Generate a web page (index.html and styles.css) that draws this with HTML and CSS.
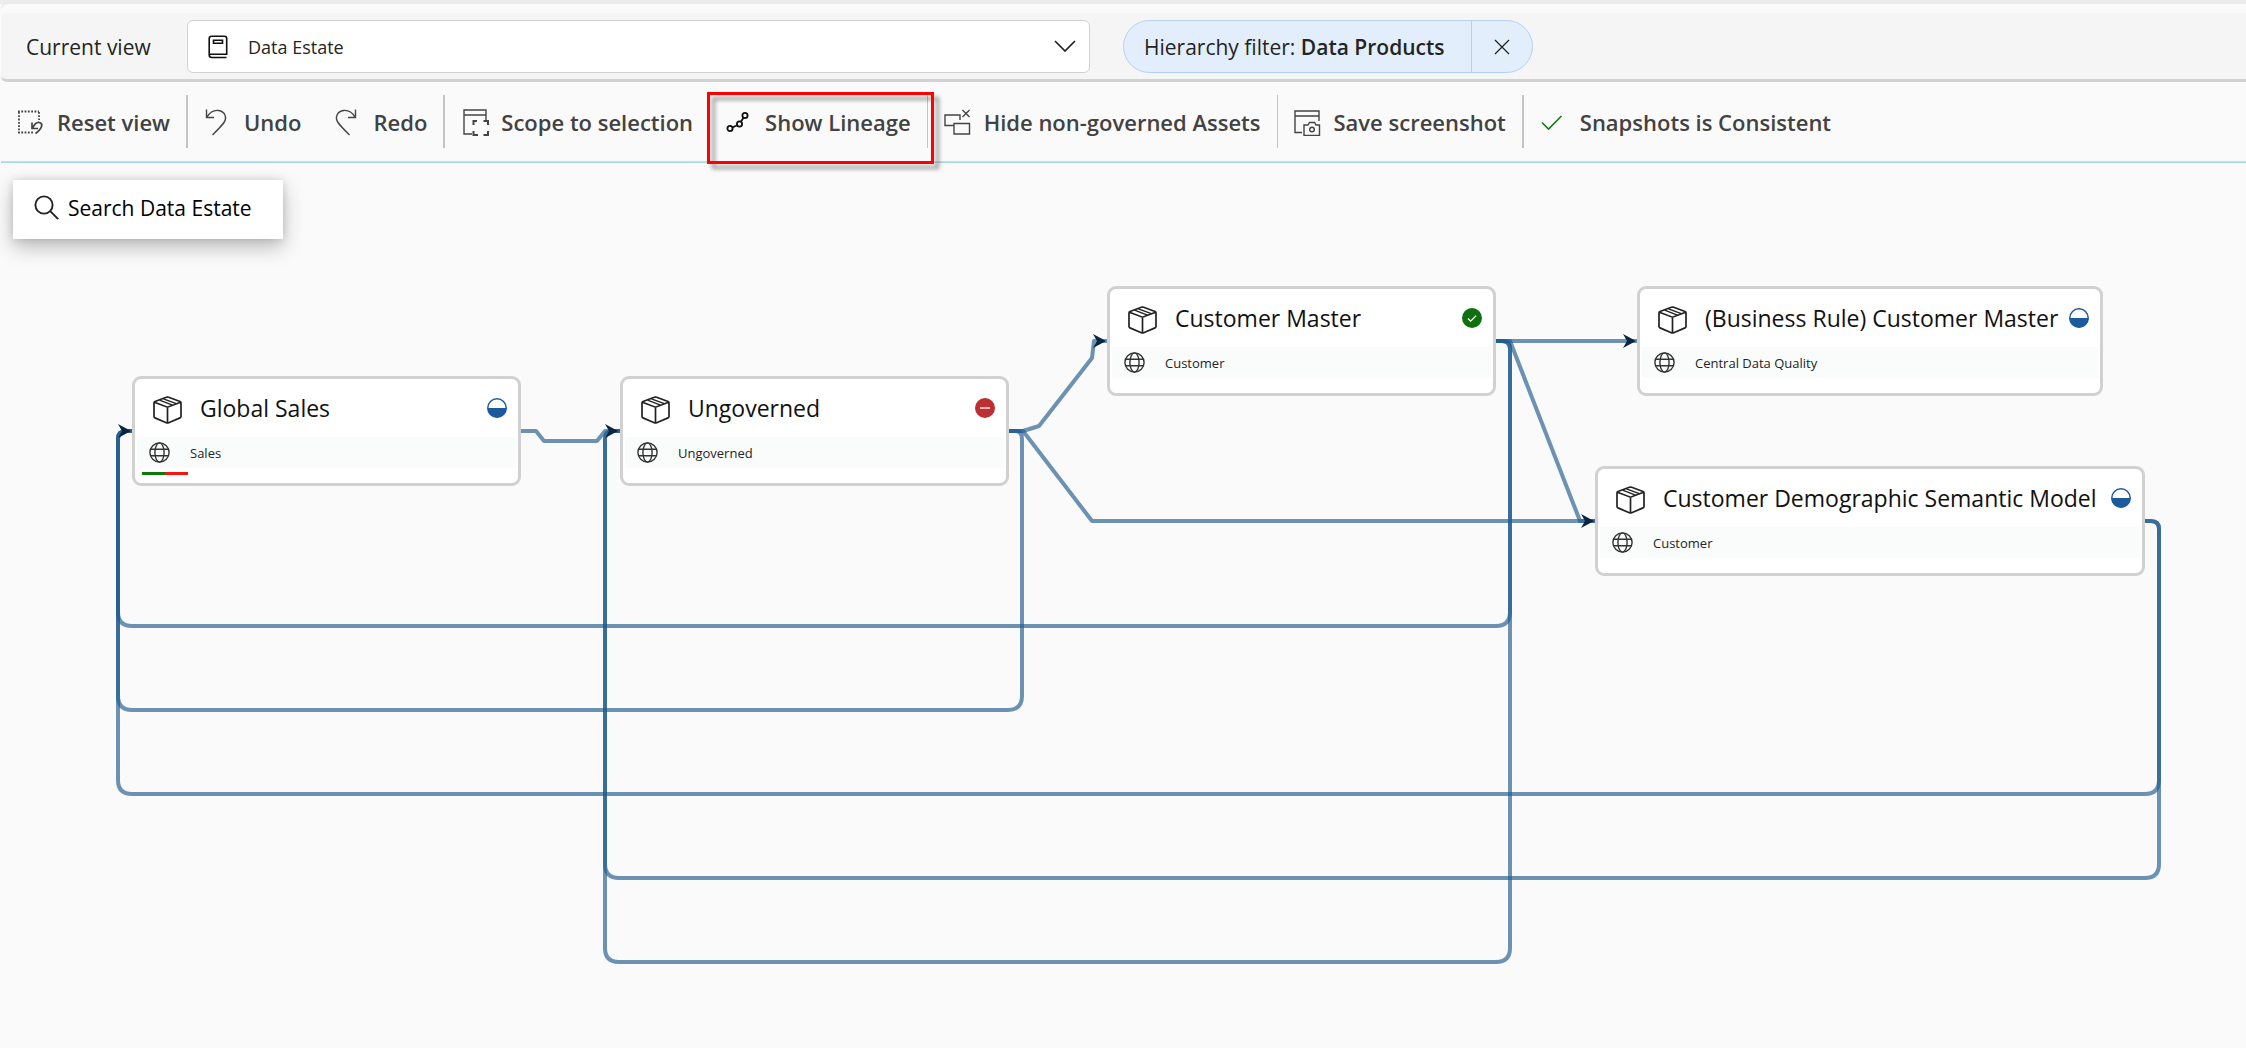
FILE: index.html
```html
<!DOCTYPE html>
<html lang="en">
<head>
<meta charset="utf-8">
<title>Data Estate</title>
<link rel="stylesheet" href="styles.css">
</head>
<body>
<svg class="defs" aria-hidden="true">
  <defs>
    <symbol id="box" viewBox="0 0 29 28">
      <path d="M13.300 1.300c.8-.3 1.600-.3 2.400 0L27 5.500c.7.300 1 .8 1 1.400v13.500c0 .7-.4 1.200-1 1.500l-11.300 4.800c-.8.300-1.600.3-2.400 0L2 21.900c-.6-.3-1-.8-1-1.500V6.900c0-.6.3-1.100 1-1.400zM1.400 6.200l13.100 5 13.100-5M14.500 11.200v15.500"/>
      <path d="M6.600 4.200l12.900 4.900M10.400 2.800l12.900 4.900" stroke-width="1.400"/>
    </symbol>
    <symbol id="globe" viewBox="0 0 21 21">
      <circle cx="10.500" cy="10.500" r="9.600"/>
      <ellipse cx="10.500" cy="10.500" rx="4.600" ry="9.600"/>
      <path d="M1.600 7.300h17.800M1.600 13.700h17.800"/>
    </symbol>
    <symbol id="half" viewBox="0 0 20 20">
      <circle cx="10" cy="10" r="9.200" fill="#fff" stroke="#1b5a9c" stroke-width="1.500"/>
      <path d="M.5 10h19a9.500 9.500 0 0 1-19 0z" fill="#1b5a9c"/>
    </symbol>
    <marker id="arrow" viewBox="0 0 13 16" markerWidth="13" markerHeight="16" refX="13" refY="8" markerUnits="userSpaceOnUse" orient="auto">
      <path d="M0 1l13 7-13 7 4-7z" fill="#0b2540"/>
    </marker>
  </defs>
</svg>

<header class="viewbar">
  <label class="viewbar-label" for="view">Current view</label>
  <div class="picker">
    <svg class="picker-icon" width="20" height="24" viewBox="0 0 20 24" fill="none" stroke="#111" stroke-width="1.600"><path d="M18.500 22.500H4c-1.800 0-2.800-1-2.800-2.500V3.500C1.200 2 2 1.200 3.500 1.200h13c1.500 0 2.200.8 2.200 2.300v15.700H1.500M5.500 5.200h9v3h-9z"/></svg>
    <select id="view" class="picker-select"><option>Data Estate</option></select>
    <svg class="picker-chevron" width="22" height="12" viewBox="0 0 22 12" fill="none" stroke="#222" stroke-width="1.700"><path d="M1 1l10 10L21 1"/></svg>
  </div>
  <div class="chip">
    <span class="chip-text">Hierarchy filter: <b>Data Products</b></span>
    <button class="chip-close" type="button" aria-label="Remove filter"><svg width="16" height="16" viewBox="0 0 16 16" fill="none" stroke="#222" stroke-width="1.300"><path d="M1 1l14 14M15 1L1 15"/></svg></button>
  </div>
</header>

<nav class="toolbar" aria-label="Diagram tools">
  <button class="tool" type="button"><svg class="tool-icon" viewBox="0 0 28 28"><path d="M1 3.500h21M2 4v21M22 4v8M1 24.500h15" stroke-width="1.800" stroke-dasharray="1.800 1.500"/><path d="M15 14.500v6h6M15.500 20c2-4 4.500-6 7-5.500 3.500 1 3.500 5.500-4 11" stroke-width="1.700"/></svg>Reset view</button>
  <span class="divider"></span>
  <button class="tool" type="button"><svg class="tool-icon" viewBox="0 0 28 28"><path d="M2.500 1.500v8h7.500M3 9c3-5 7-7 11.500-6.500 6 .7 9 6.500 5.500 12-1 1.500-7 8-11.500 12.500"/></svg>Undo</button>
  <button class="tool" type="button"><svg class="tool-icon" viewBox="0 0 28 28"><path d="M22.500 1.500v8h-7.500M22 9c-3-5-7-7-11.500-6.500-6 .7-9 6.500-5.500 12 1 1.500 7 8 11.500 12.500"/></svg>Redo</button>
  <span class="divider"></span>
  <button class="tool" type="button"><svg class="tool-icon" viewBox="0 0 28 28"><path d="M11 26H3V2h22v10M3 7h22"/><path d="M12.500 17v-4H16M22.500 13H27v4M12.500 23v4H17M22.500 27H27v-4" stroke-width="2"/></svg>Scope to selection</button>
  <button class="tool tool-marked" type="button"><svg class="tool-icon tool-icon-dark" viewBox="0 0 28 28"><circle cx="5" cy="20.500" r="2.600"/><circle cx="14.500" cy="16" r="2.600"/><circle cx="20" cy="7.500" r="2.600"/><path d="M7.500 19.500l4.500-2.300M15.900 13.700l2.600-3.900"/></svg>Show Lineage</button>
  <span class="divider divider-thin"></span>
  <button class="tool" type="button"><svg class="tool-icon" viewBox="0 0 28 28"><path d="M16 12V7H1v10.500h9M10 15.500h15.500V26H10zM18.500 2l7 7M25.500 2l-7 7"/></svg>Hide non-governed Assets</button>
  <span class="divider divider-thin"></span>
  <button class="tool" type="button"><svg class="tool-icon" viewBox="0 0 28 28"><path d="M8 24.500H1V3h24v10M1 8h24M10 17h4l1.500-2.500h5L22 17h3.500v10.500H10z"/><circle cx="18" cy="21.500" r="2.300"/></svg>Save screenshot</button>
  <span class="divider"></span>
  <button class="tool" type="button"><svg class="tool-icon tool-icon-ok" viewBox="0 0 28 28"><path d="M2 14.500l6.500 6.500L21.500 8"/></svg>Snapshots is Consistent</button>
</nav>

<main class="canvas">
  <svg class="edges" aria-hidden="true">
    <path d="M521 268H536L544 278H597L605 268H620"/>
    <path d="M1008 268H1023L1039 263L1092 195L1094 178H1107"/>
    <path d="M1008 268H1023L1092 358H1595"/>
    <path d="M1496 178H1637"/>
    <path d="M1496 178H1510L1580 358H1595"/>
    <path d="M1496 178H1502Q1510 178 1510 186V449Q1510 463 1496 463H132Q118 463 118 449V276Q118 268 126 268H132"/>
    <path d="M1008 268H1015Q1022 268 1022 276V533Q1022 547 1008 547H132Q118 547 118 533V276Q118 268 126 268H132"/>
    <path d="M2145 358H2151Q2159 358 2159 366V617Q2159 631 2145 631H132Q118 631 118 617V276Q118 268 126 268H132"/>
    <path d="M2145 358H2151Q2159 358 2159 366V701Q2159 715 2145 715H619Q605 715 605 701V276Q605 268 613 268H620"/>
    <path d="M1496 178H1502Q1510 178 1510 186V785Q1510 799 1496 799H619Q605 799 605 785V276Q605 268 613 268H620"/>
    <g class="heads">
      <path d="M118 268H131"/>
      <path d="M605 268H618"/>
      <path d="M1093 178H1106"/>
      <path d="M1623 178H1636"/>
      <path d="M1581 358H1594"/>
    </g>
  </svg>

  <button class="search" type="button"><svg width="26" height="26" viewBox="0 0 26 26" fill="none" stroke="#222" stroke-width="1.900"><circle cx="10" cy="10" r="8.600"/><path d="M16.200 16.200l8 8"/></svg>Search Data Estate</button>

  <article class="node node-sales">
    <div class="node-head"><svg class="node-icon"><use href="#box"/></svg><h2>Global Sales</h2><svg class="status"><use href="#half"/></svg></div>
    <div class="node-domain"><svg class="globe"><use href="#globe"/></svg>Sales</div>
    <div class="node-score"></div>
  </article>
  <article class="node node-ungoverned">
    <div class="node-head"><svg class="node-icon"><use href="#box"/></svg><h2>Ungoverned</h2><svg class="status" viewBox="0 0 20 20"><circle cx="10" cy="10" r="10" fill="#bc2f32"/><path d="M5 10h10" stroke="#fff" stroke-width="1.300"/></svg></div>
    <div class="node-domain"><svg class="globe"><use href="#globe"/></svg>Ungoverned</div>
  </article>
  <article class="node node-master">
    <div class="node-head"><svg class="node-icon"><use href="#box"/></svg><h2>Customer Master</h2><svg class="status" viewBox="0 0 20 20"><circle cx="10" cy="10" r="10" fill="#0e700e"/><path d="M6 10.500l2.700 2.700L14 7.800" fill="none" stroke="#fff" stroke-width="1.300"/></svg></div>
    <div class="node-domain"><svg class="globe"><use href="#globe"/></svg>Customer</div>
  </article>
  <article class="node node-rule">
    <div class="node-head"><svg class="node-icon"><use href="#box"/></svg><h2>(Business Rule) Customer Master</h2><svg class="status"><use href="#half"/></svg></div>
    <div class="node-domain"><svg class="globe"><use href="#globe"/></svg>Central Data Quality</div>
  </article>
  <article class="node node-model">
    <div class="node-head"><svg class="node-icon"><use href="#box"/></svg><h2>Customer Demographic Semantic Model</h2><svg class="status"><use href="#half"/></svg></div>
    <div class="node-domain"><svg class="globe"><use href="#globe"/></svg>Customer</div>
  </article>
</main>
</body>
</html>
```
FILE: styles.css
```css
* { box-sizing: border-box; }

body {
  margin: 0;
  min-height: 100vh;
  display: flex;
  flex-direction: column;
  border-top: 4px solid #ececec;
  background: #fafafa;
  color: #242424;
  font-family: "Open Sans", "Noto Sans", sans-serif;
  font-size: 21px;
  line-height: 28px;
}

button, select { font: inherit; color: inherit; }
button { border: 0; background: none; cursor: pointer; }
.defs { position: absolute; width: 0; height: 0; }

/* view selector and active filter */
.viewbar {
  display: flex;
  align-items: center;
  margin: 9px 0 0 1px;
  padding: 7px 0 6px 25px;
  border-bottom: 3px solid #d2d2d2;
  border-radius: 6px 0 0 6px;
  background: #f5f5f5;
  box-shadow: 0 -9px 0 #fafafa, 0 -10px 0 #dfdfdf;
}
.viewbar-label { flex: 0 0 161px; padding-top: 1px; }
.picker { position: relative; flex: 0 1 903px; }
.picker-select {
  display: block;
  width: 100%;
  height: 53px;
  padding: 0 60px 0 60px;
  border: 1px solid #d1d1d1;
  border-radius: 6px;
  background: #fff;
  appearance: none;
  font-size: 18px;
}
.picker-icon { position: absolute; left: 21px; top: 15px; }
.picker-chevron { position: absolute; right: 14px; top: 20px; pointer-events: none; }
.chip {
  display: flex;
  margin-left: 33px;
  height: 53px;
  border: 1px solid #b4d1f5;
  border-radius: 27px;
  background: #e2eefc;
  line-height: 53px;
  white-space: nowrap;
}
.chip-text { padding: 0 26px 0 20px; }
.chip-text b { font-weight: 600; }
.chip-close {
  display: flex;
  align-items: center;
  justify-content: center;
  width: 61px;
  padding: 0;
  border-left: 1px solid #b4d1f5;
}

/* toolbar */
.toolbar {
  display: flex;
  align-items: center;
  margin-left: 1px;
  padding: 13px 0 14px;
  border-bottom: 1px solid #add8e6;
  box-shadow: inset 0 -1px 0 #d8d8d8;
}
.tool {
  display: flex;
  align-items: center;
  gap: 12px;
  height: 53px;
  padding: 0 16px;
  color: #424242;
  font-size: 22px;
  font-weight: 600;
  white-space: nowrap;
}
.tool-icon {
  flex: none;
  width: 28px;
  height: 28px;
  fill: none;
  stroke: #444;
  stroke-width: 1.4;
}
.tool-icon-dark { stroke: #111; stroke-width: 1.8; }
.tool-icon-ok { stroke: #107c10; stroke-width: 1.6; }
.divider { width: 2px; height: 53px; background: #c4c4c4; }
.divider-thin { width: 1px; }
.tool-marked { position: relative; }
.tool-marked::after {
  content: "";
  position: absolute;
  inset: -3px -7px -16px -2px;
  border: 3px solid #f00;
  filter: drop-shadow(5px 5px 2px rgba(0, 0, 0, .4));
}

/* lineage canvas */
.canvas {
  position: relative;
  flex: 1;
  min-width: 2180px;
  min-height: 820px;
}
.edges {
  position: absolute;
  inset: 0;
  width: 100%;
  height: 100%;
  fill: none;
  stroke: #1f5a8d;
  stroke-width: 4;
  stroke-opacity: .65;
  stroke-linejoin: round;
}
.heads { marker-end: url(#arrow); stroke: none; }
.search {
  position: relative;
  display: flex;
  align-items: center;
  gap: 8px;
  height: 59px;
  margin: 17px 0 0 13px;
  padding: 0 31px 3px 21px;
  background: #fff;
  color: #000;
  box-shadow: 0 8px 20px rgba(0, 0, 0, .26), 0 0 8px rgba(0, 0, 0, .12);
}

.node {
  position: absolute;
  width: 389px;
  height: 110px;
  padding: 2px;
  border: 3px solid #d1d1d1;
  border-radius: 9px;
  background: #fff;
}
.node-sales { left: 132px; top: 213px; }
.node-ungoverned { left: 620px; top: 213px; }
.node-master { left: 1107px; top: 123px; }
.node-rule { left: 1637px; top: 123px; width: 466px; }
.node-model { left: 1595px; top: 303px; width: 550px; }

.node-head {
  display: flex;
  align-items: center;
  height: 56px;
  padding: 0 9px 2px 16px;
}
.node-head h2 {
  flex: 1;
  margin: 0 0 0 18px;
  color: #111;
  font-size: 23px;
  font-weight: 400;
  white-space: nowrap;
}
.node-icon {
  width: 29px;
  height: 28px;
  margin-top: 3px;
  fill: none;
  stroke: #222;
  stroke-width: 1.7;
}
.status { width: 20px; height: 20px; }
.node-domain {
  display: flex;
  align-items: center;
  gap: 20px;
  height: 31px;
  padding-left: 12px;
  background: #fafcfb;
  font-size: 13px;
  line-height: 20px;
}
.globe {
  width: 21px;
  height: 21px;
  fill: none;
  stroke: #333;
  stroke-width: 1.4;
}
.node-score {
  width: 46px;
  height: 3px;
  margin: 4px 0 0 5px;
  background: linear-gradient(90deg, #0b7a0b 50%, #f81414 50%);
}
```
